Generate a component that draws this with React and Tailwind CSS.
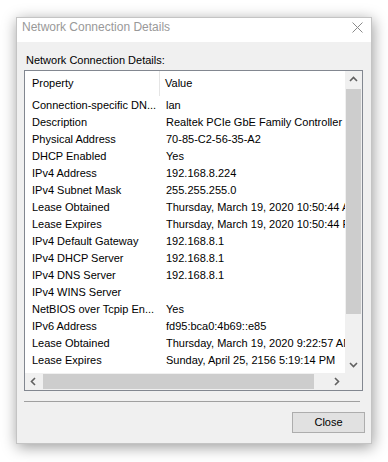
import React from "react";

const rows = [
  ["Connection-specific DN...", "lan"],
  ["Description", "Realtek PCIe GbE Family Controller"],
  ["Physical Address", "70-85-C2-56-35-A2"],
  ["DHCP Enabled", "Yes"],
  ["IPv4 Address", "192.168.8.224"],
  ["IPv4 Subnet Mask", "255.255.255.0"],
  ["Lease Obtained", "Thursday, March 19, 2020 10:50:44 AM"],
  ["Lease Expires", "Thursday, March 19, 2020 10:50:44 PM"],
  ["IPv4 Default Gateway", "192.168.8.1"],
  ["IPv4 DHCP Server", "192.168.8.1"],
  ["IPv4 DNS Server", "192.168.8.1"],
  ["IPv4 WINS Server", ""],
  ["NetBIOS over Tcpip En...", "Yes"],
  ["IPv6 Address", "fd95:bca0:4b69::e85"],
  ["Lease Obtained", "Thursday, March 19, 2020 9:22:57 AM"],
  ["Lease Expires", "Sunday, April 25, 2156 5:19:14 PM"],
  ["Link-local IPv6 Address", "fe80::a451:84c9:3338:1d25%7"],
];

function Chevron({ dir }) {
  const pts = {
    up: "1,6 4.5,2.5 8,6",
    down: "1,3 4.5,6.5 8,3",
    left: "6,1 2.5,4.5 6,8",
    right: "3,1 6.5,4.5 3,8",
  }[dir];
  return (
    <svg width="9" height="9" viewBox="0 0 9 9">
      <polyline points={pts} fill="none" stroke="#606060" strokeWidth="1.6" />
    </svg>
  );
}

export default function App() {
  return (
    <div
      className="w-[388px] h-[462px] bg-white pt-[17px] pl-[16px] overflow-hidden"
      style={{ fontFamily: '"Liberation Sans", Arial, sans-serif' }}
    >
      <div className="w-[356px] h-[427px] flex flex-col border border-[#c4c4c4] shadow-[1px_3px_14px_rgba(0,0,0,0.4)]">
        {/* title bar */}
        <div className="h-[24px] bg-white flex items-start justify-between pl-[5px] pr-[8px] pt-px shrink-0">
          <span className="text-[12px] leading-[16px] text-[#999999]">Network Connection Details</span>
          <svg width="11" height="11" viewBox="0 0 11 11" className="mt-[3px]">
            <path d="M0.5 0.5 L10.5 10.5 M10.5 0.5 L0.5 10.5" stroke="#8a8a8a" strokeWidth="1" />
          </svg>
        </div>

        <div className="flex-1 bg-[#f0f0f0] px-[7px] pt-[11px] flex flex-col">
          <div className="text-[11px] leading-[15px] text-black pl-[2px]">Network Connection Details:</div>

          {/* list box */}
          <div className="mt-[2px] w-[339px] h-[321px] border border-[#828790] bg-white flex flex-col">
            <div className="flex h-[302px]">
              <div className="w-[320px] overflow-hidden text-[11px] text-black">
                <div className="flex h-[25px] items-center">
                  <div className="w-[135px] pl-[7px] h-full flex items-center border-r border-[#e5e5e5]">Property</div>
                  <div className="pl-[5px]">Value</div>
                </div>
                <div className="pt-px">
                  {rows.map(([k, v], i) => (
                    <div key={i} className="flex h-[17px] items-center whitespace-nowrap">
                      <div className="w-[135px] shrink-0 pl-[7px]">{k}</div>
                      <div className="pl-[6px]">{v}</div>
                    </div>
                  ))}
                </div>
              </div>
              {/* vertical scrollbar */}
              <div className="w-[17px] bg-[#f0f0f0] flex flex-col">
                <div className="h-[17px] flex items-center justify-center">
                  <Chevron dir="up" />
                </div>
                <div className="mx-px mt-px h-[225px] bg-[#cdcdcd]" />
                <div className="flex-1" />
                <div className="h-[17px] flex items-center justify-center">
                  <Chevron dir="down" />
                </div>
              </div>
            </div>
            {/* horizontal scrollbar */}
            <div className="flex h-[17px] bg-[#f0f0f0]">
              <div className="w-[17px] flex items-center justify-center">
                <Chevron dir="left" />
              </div>
              <div className="my-px ml-px w-[271px] bg-[#cdcdcd]" />
              <div className="flex-1" />
              <div className="w-[17px] flex items-center justify-center">
                <Chevron dir="right" />
              </div>
              <div className="w-[17px]" />
            </div>
          </div>

          <div className="mt-[10px] w-[336px] h-px bg-[#a0a0a0]" />

          <div className="mt-[10px] flex justify-end">
            <button className="w-[73px] h-[21px] border border-[#adadad] bg-[#e1e1e1] text-[11px] text-black mr-[-1px]">
              Close
            </button>
          </div>
        </div>
      </div>
    </div>
  );
}
